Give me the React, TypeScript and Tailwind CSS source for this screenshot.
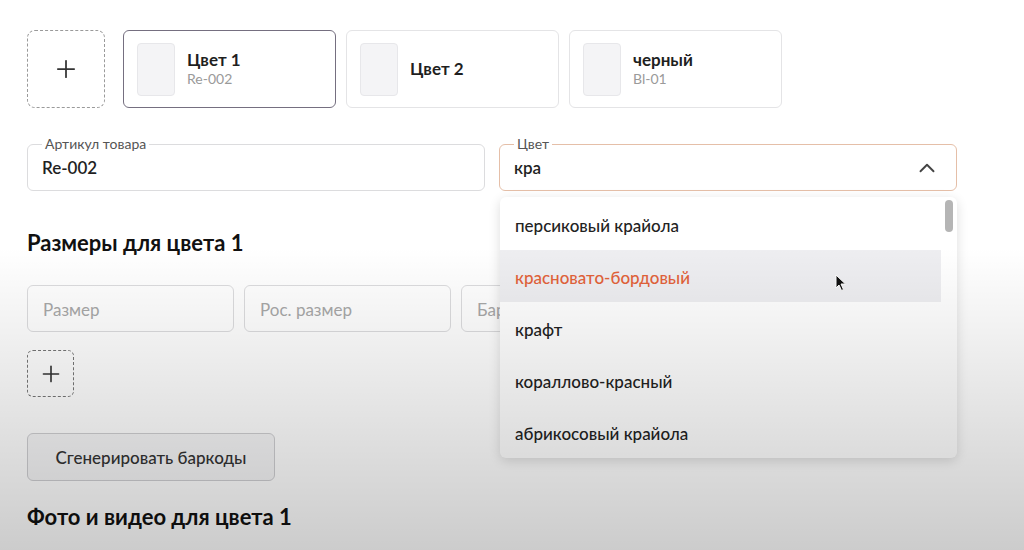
import { Plus, ChevronUp } from 'lucide-react'

const colors = [
  { title: 'Цвет 1', code: 'Re-002', selected: true },
  { title: 'Цвет 2', code: '', selected: false },
  { title: 'черный', code: 'Bl-01', selected: false },
]

const options = [
  'персиковый крайола',
  'красновато-бордовый',
  'крафт',
  'кораллово-красный',
  'абрикосовый крайола',
]

function ColorCard({ title, code, selected }: { title: string; code: string; selected: boolean }) {
  return (
    <div
      className={`flex h-[78px] w-[213px] items-center rounded-md border bg-white ${
        selected ? 'border-[#756f80]' : 'border-[#e4e4e6]'
      }`}
    >
      <div className="ml-[13px] h-[53px] w-[38px] rounded border border-[#e7e7ea] bg-[#f4f4f6]" />
      <div className="ml-[12px] flex flex-col">
        <span className="text-[17px] font-bold leading-[20px] text-[#1f1f1f]">{title}</span>
        {code && <span className="text-[14px] leading-[18px] text-[#9a9a9a]">{code}</span>}
      </div>
    </div>
  )
}

function Cursor() {
  return (
    <svg className="absolute left-[335px] top-[77px]" width="12" height="18" viewBox="0 0 12 18">
      <path d="M1 1 L1 14 L4 11 L6.5 16.5 L8.5 15.5 L6 10 L10.5 10 Z" fill="#111" stroke="#fff" strokeWidth="1" />
    </svg>
  )
}

export default function App() {
  return (
    <div
      className="relative h-[550px] w-[1024px] overflow-hidden bg-white px-[27px] pt-[30px] text-[#1f1f1f]"
      style={{ fontFamily: 'Lato, "Noto Sans", sans-serif' }}
    >
      <div className="flex items-center">
        <div className="flex h-[78px] w-[78px] items-center justify-center rounded-lg border border-dashed border-[#9a9a9a]">
          <Plus size={28} strokeWidth={1.5} className="text-[#333]" />
        </div>
        <div className="ml-[18px] flex gap-[10px]">
          {colors.map((c) => (
            <ColorCard key={c.title} title={c.title} code={c.code} selected={c.selected} />
          ))}
        </div>
      </div>

      <div className="mt-[36px] flex gap-[14px]">
        <div className="w-[458px]">
          <div className="relative flex h-[47px] items-center rounded-md border border-[#dcdcde] bg-white px-[14px]">
            <span className="absolute -top-[9px] left-[14px] bg-white px-[3px] text-[14px] leading-[16px] text-[#555]">
              Артикул товара
            </span>
            <span className="text-[17px] font-semibold">Re-002</span>
          </div>

          <h2 className="mt-[39px] text-[22px] font-bold leading-[26px] text-[#111]">Размеры для цвета 1</h2>

          <div className="mt-[29px] flex gap-[10px]">
            {['Размер', 'Рос. размер', 'Баркод'].map((p) => (
              <div
                key={p}
                className="flex h-[47px] w-[207px] shrink-0 items-center rounded-md border border-[#dcdcde] bg-white px-[15px] pt-[2px] text-[17px] text-[#a8a8a8]"
              >
                {p}
              </div>
            ))}
          </div>

          <div className="mt-[18px] flex h-[47px] w-[47px] items-center justify-center rounded-md border border-dashed border-[#777]">
            <Plus size={26} strokeWidth={1.5} className="text-[#333]" />
          </div>

          <button className="mt-[36px] flex h-[48px] w-[248px] items-center justify-center rounded-md border border-[#cfcfd2] bg-[#f6f6f7] pt-[2px] text-[17px] font-medium text-[#333]">
            Сгенерировать баркоды
          </button>

          <h2 className="mt-[23px] text-[22px] font-bold leading-[26px] text-[#111]">Фото и видео для цвета 1</h2>
        </div>

        <div className="relative h-[47px] w-[458px]">
          <div className="relative flex h-[47px] items-center rounded-md border border-[#e5bfa8] bg-white px-[14px]">
            <span className="absolute -top-[9px] left-[14px] bg-white px-[3px] text-[14px] leading-[16px] text-[#555]">
              Цвет
            </span>
            <span className="flex-1 text-[17px] font-semibold">кра</span>
            <ChevronUp size={26} strokeWidth={1.75} className="mr-[2px] text-[#444]" />
          </div>

          <div className="absolute left-[1px] right-0 top-[53px] flex h-[261px] rounded-md bg-white shadow-[0_3px_12px_rgba(0,0,0,0.14)]">
            <ul className="flex-1 pt-[1px]">
              {options.map((o, i) => (
                <li
                  key={o}
                  className={`flex h-[52px] items-center px-[15px] pt-[3px] text-[17px] font-medium ${
                    i === 1 ? 'bg-[#eeeef1] text-[#e2623a]' : 'text-[#222]'
                  }`}
                >
                  {o}
                </li>
              ))}
            </ul>
            <div className="w-[16px] pt-[3px]">
              <div className="mx-auto h-[32px] w-[8px] rounded-full bg-[#b5b5b5]" />
            </div>
            <Cursor />
          </div>
        </div>
      </div>

      <div className="pointer-events-none absolute inset-0 bg-linear-to-b from-transparent from-45% to-black/20" />
    </div>
  )
}
